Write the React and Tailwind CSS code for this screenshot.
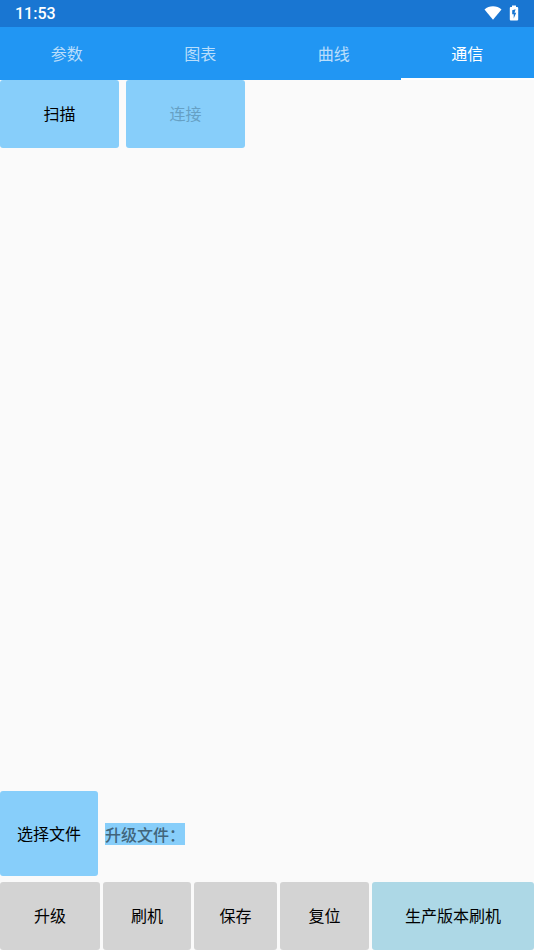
import { useState } from "react";

const tabs = ["参数", "图表", "曲线", "通信"];

const StatusBar = () => {
    return (
        <header className="flex h-[27px] items-center justify-between bg-[#1976d2] px-[15px] text-white">
            <time className="font-[Roboto,sans-serif] text-[16px] font-medium leading-[27px]">11:53</time>
            <div className="flex items-center gap-[7px] pb-[2px]">
                <svg width="18" height="14" viewBox="0 0 18 14" fill="currentColor" aria-hidden="true">
                    <path d="M9 13.8 0.5 3.4C2.8 1.4 5.8 0.2 9 0.2s6.2 1.2 8.5 3.2L9 13.8Z" />
                </svg>
                <svg width="10" height="16" viewBox="0 0 10 16" fill="currentColor" aria-hidden="true">
                    <path
                        fillRule="evenodd"
                        d="M3 0.4h4v1.6h1.3c.5 0 .9.4.9.9v11.6c0 .5-.4.9-.9.9H1.7c-.5 0-.9-.4-.9-.9V2.9c0-.5.4-.9.9-.9H3V.4ZM6.6 4.2 3.2 5.2v4h1.5v4.2l2.5-5.6H5.5l1.1-3.6Z"
                    />
                </svg>
            </div>
        </header>
    );
};

const Button = ({ className = "", children, ...props }) => {
    return (
        <button
            type="button"
            className={`rounded-[3px] pb-[2px] text-center text-black disabled:text-[#66a0c4] ${className}`}
            {...props}
        >
            {children}
        </button>
    );
};

const App = () => {
    const [active, setActive] = useState("通信");

    return (
        <div className="flex min-h-screen flex-col bg-[#fafafa] font-['Noto_Sans_CJK_SC',sans-serif] text-[16px] leading-[22px]">
            <StatusBar />

            <nav className="grid h-[53px] grid-cols-4 bg-[#2196f3]" role="tablist">
                {tabs.map((tab) => (
                    <button
                        key={tab}
                        type="button"
                        role="tab"
                        aria-selected={active === tab}
                        onClick={() => setActive(tab)}
                        className={`border-b-2 ${active === tab ? "border-white text-white" : "border-transparent text-white/70"}`}
                    >
                        {tab}
                    </button>
                ))}
            </nav>

            <main className="flex flex-1 flex-col">
                <div className="flex gap-[7px]">
                    <Button className="h-[68px] w-[119px] bg-[#87cefa]">扫描</Button>
                    <Button className="h-[68px] w-[119px] bg-[#87cefa]" disabled>连接</Button>
                </div>

                <div className="mt-auto flex items-center gap-[7px]">
                    <Button className="h-[85px] w-[98px] bg-[#87cefa]">选择文件</Button>
                    <span className="bg-[#87cefa] font-medium text-[#41657b]">升级文件：</span>
                </div>

                <div className="mt-[6px] grid h-[68px] grid-cols-[100fr_88fr_83fr_89fr_162fr] gap-[3px]">
                    <Button className="bg-[#d3d3d3]">升级</Button>
                    <Button className="bg-[#d3d3d3]">刷机</Button>
                    <Button className="bg-[#d3d3d3]">保存</Button>
                    <Button className="bg-[#d3d3d3]">复位</Button>
                    <Button className="bg-[#add8e6]">生产版本刷机</Button>
                </div>
            </main>
        </div>
    );
};

export default App;
